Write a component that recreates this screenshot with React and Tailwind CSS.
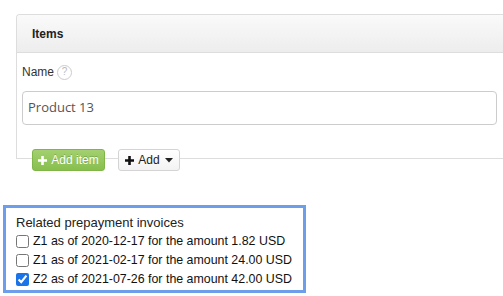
import React from "react";

export default function App() {
  const rows = [
    { t: "Z1 as of 2020-12-17 for the amount 1.82 USD", c: false },
    { t: "Z1 as of 2021-02-17 for the amount 24.00 USD", c: false },
    { t: "Z2 as of 2021-07-26 for the amount 42.00 USD", c: true },
  ];
  return (
    <div className="w-[503px] h-[296px] bg-white overflow-hidden" style={{ fontFamily: '"Liberation Sans", Arial, sans-serif' }}>
      <div className="ml-[16px] mt-[14px] w-[500px] border-l border-t border-b border-[#dddddd] rounded-tl-[4px]">
        <div className="h-[38px] bg-gradient-to-b from-[#fafafa] to-[#ededed] border-b border-[#dddddd] rounded-tl-[4px] flex items-center pl-[15px]">
          <span className="text-[12px] font-bold text-[#222]">Items</span>
        </div>
        <div className="pl-[5px] pt-[10px] pb-[33px] w-[480px]">
          <div className="flex items-center h-[18px] text-[12px] text-[#333]">
            <span>Name</span>
            <span className="ml-[3px] w-[15px] h-[15px] rounded-full border border-[#cccccc] text-[10px] text-[#bbbbbb] flex items-center justify-center leading-none">?</span>
          </div>
          <div className="mt-[10px] h-[34px] border border-[#cccccc] rounded-[4px] flex items-center pl-[5px] text-[13px] text-[#555555]" style={{ fontFamily: '"Open Sans", "Noto Sans", sans-serif' }}>
            Product 13
          </div>
        </div>
      </div>
      <div className="flex items-center mt-[-10px] ml-[32px] gap-[13px]">
        <div className="h-[22px] w-[73px] rounded-[3px] bg-gradient-to-b from-[#a2d06e] to-[#88bf4e] border border-[#80b548] flex items-center justify-center gap-[4px] text-white text-[12px]" style={{ textShadow: "0 -1px 0 rgba(0,0,0,0.2)" }}>
          <svg width="9" height="9" viewBox="0 0 9 9"><path d="M3.2 0h2.6v3.2H9v2.6H5.8V9H3.2V5.8H0V3.2h3.2z" fill="white" /></svg>
          <span>Add item</span>
        </div>
        <div className="h-[22px] w-[62px] rounded-[3px] bg-gradient-to-b from-white to-[#f3f3f3] border border-[#d4d4d4] flex items-center justify-center gap-[4px] text-[#222] text-[12px]">
          <svg width="9" height="9" viewBox="0 0 9 9"><path d="M3.2 0h2.6v3.2H9v2.6H5.8V9H3.2V5.8H0V3.2h3.2z" fill="#111" /></svg>
          <span>Add</span>
          <svg width="8" height="5" viewBox="0 0 8 5" className="ml-[1px]"><path d="M0 0h8L4 4.5z" fill="#222" /></svg>
        </div>
      </div>
      <div className="ml-[3px] mt-[34px] w-[303px] h-[88px] border-[3px] border-[#6d9eeb] pl-[10px] pt-[5px] text-[#222]">
        <div className="text-[13px] leading-[19px] text-[#222]">Related prepayment invoices</div>
        {rows.map((r, i) => (
          <label key={i} className="flex items-center h-[19px] text-[12.4px] whitespace-nowrap text-[#111]">
            <input type="checkbox" defaultChecked={r.c} className="w-[13px] h-[13px] m-0 mr-[4px] accent-[#1a73e8]" />
            <span>{r.t}</span>
          </label>
        ))}
      </div>
    </div>
  );
}
